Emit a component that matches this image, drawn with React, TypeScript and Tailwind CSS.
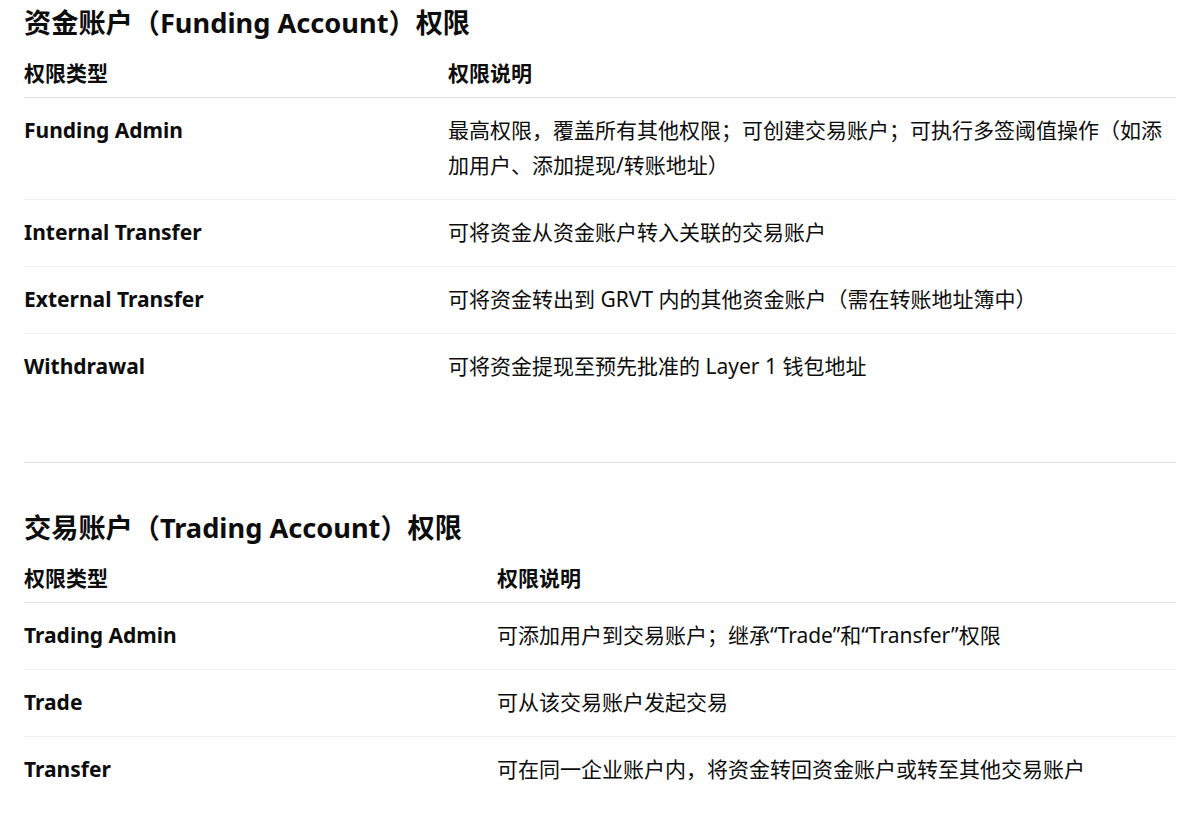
import React from "react";

type Row = { name: string; desc: string };

const funding: Row[] = [
  {
    name: "Funding Admin",
    desc: "最高权限，覆盖所有其他权限；可创建交易账户；可执行多签阈值操作（如添加用户、添加提现/转账地址）",
  },
  { name: "Internal Transfer", desc: "可将资金从资金账户转入关联的交易账户" },
  { name: "External Transfer", desc: "可将资金转出到 GRVT 内的其他资金账户（需在转账地址簿中）" },
  { name: "Withdrawal", desc: "可将资金提现至预先批准的 Layer 1 钱包地址" },
];

const trading: Row[] = [
  { name: "Trading Admin", desc: "可添加用户到交易账户；继承“Trade”和“Transfer”权限" },
  { name: "Trade", desc: "可从该交易账户发起交易" },
  { name: "Transfer", desc: "可在同一企业账户内，将资金转回资金账户或转至其他交易账户" },
];

function Table({ rows, col, top }: { rows: Row[]; col: string; top: string }) {
  return (
    <div className={top + " w-full"}>
      <div className="flex border-b border-[#e3e3e3] pb-[5px] leading-[35.6px] font-bold">
        <div className={col}>权限类型</div>
        <div className="flex-1">权限说明</div>
      </div>
      {rows.map((r, i) => (
        <div
          key={r.name}
          className={
            "flex py-[15.2px] leading-[35.6px] " +
            (i < rows.length - 1 ? "border-b border-[#efefef]" : "")
          }
        >
          <div className={col + " font-bold"}>{r.name}</div>
          <div className="flex-1">{r.desc}</div>
        </div>
      ))}
    </div>
  );
}

export default function App() {
  return (
    <div
      className="min-h-[824px] bg-white pl-[24px] pr-[6px] pt-[5px] text-[21px] text-[#0d0d0d]"
      style={{ fontFamily: '"Noto Sans", "Noto Sans CJK SC", sans-serif' }}
    >
      <h1 className="text-[27.2px] font-bold leading-[36px]">资金账户（Funding Account）权限</h1>
      <Table rows={funding} col="w-[424px] shrink-0" top="mt-[15px]" />
      <div className="mt-[62px] border-t border-[#e3e3e3]" />
      <h1 className="mt-[47px] text-[27.2px] font-bold leading-[36px]">交易账户（Trading Account）权限</h1>
      <Table rows={trading} col="w-[473px] shrink-0" top="mt-[15px]" />
    </div>
  );
}
